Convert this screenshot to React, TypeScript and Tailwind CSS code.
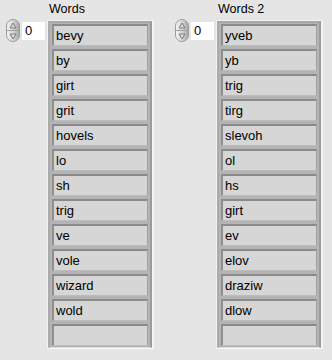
import React from "react";

const words = ["bevy", "by", "girt", "grit", "hovels", "lo", "sh", "trig", "ve", "vole", "wizard", "wold"];
const reversed = words.map((w) => w.split("").reverse().join(""));

function Spinner() {
  return (
    <div className="flex h-[23px] w-[14px] flex-col overflow-hidden rounded-full border border-[#9c9c9c] bg-gradient-to-r from-[#f4f4f4] via-[#d8d8d8] to-[#a8a8a8]">
      <div className="flex flex-1 items-center justify-center border-b border-[#a0a0a0]">
        <svg width="8" height="7" viewBox="0 0 8 7">
          <path d="M4 1 L7 6 L1 6 Z" fill="#dcdcdc" stroke="#7a7a7a" strokeWidth="1" />
        </svg>
      </div>
      <div className="flex flex-1 items-center justify-center">
        <svg width="8" height="7" viewBox="0 0 8 7">
          <path d="M1 1 L7 1 L4 6 Z" fill="#dcdcdc" stroke="#7a7a7a" strokeWidth="1" />
        </svg>
      </div>
    </div>
  );
}

function Cell({ text }: { text: string }) {
  return (
    <div className="h-[22px] w-[96px] border-t-2 border-l-2 border-b border-r border-t-[#8a8a8a] border-l-[#8f8f8f] border-b-[#bcbcbc] border-r-[#a2a2a2] bg-[#d6d6d6] pl-[2px] text-[13px] leading-[19px] text-[#000]">
      {text}
    </div>
  );
}

function WordArray({ label, items }: { label: string; items: string[] }) {
  return (
    <div className="flex flex-col">
      <div className="ml-[43px] h-[19px] pt-[2px] text-[12.5px] leading-[15px] text-[#000]">{label}</div>
      <div className="flex items-start">
        <div className="flex items-center">
          <Spinner />
          <div className="ml-[1px] h-[20px] w-[25px] border border-[#e4e4e4] bg-white pl-[3px] text-[13px] leading-[18px]">0</div>
        </div>
        <div className="mt-[1px] ml-[1px] border-t border-l border-b border-r-2 border-t-[#f2f2f2] border-l-[#f2f2f2] border-b-[#fafafa] border-r-[#f4f4f4] bg-[#c8c8c8]">
          <div className="flex flex-col gap-[3px] border-t-2 border-l-2 border-r-2 border-b border-t-[#a8a8a8] border-l-[#ababab] border-r-[#9b9b9b] border-b-[#dadada] bg-[#b4b4b4] pt-[1px] pb-[1px] pl-[2px] pr-[2px]">
            {items.map((w, i) => (
              <Cell key={i} text={w} />
            ))}
            <Cell text="" />
          </div>
        </div>
      </div>
    </div>
  );
}

export default function App() {
  return (
    <div
      className="flex h-[360px] w-[332px] gap-[21px] bg-[#e5e5e5] pl-[6px]"
      style={{ fontFamily: '"Liberation Sans", Arial, sans-serif' }}
    >
      <WordArray label="Words" items={words} />
      <WordArray label="Words 2" items={reversed} />
    </div>
  );
}
